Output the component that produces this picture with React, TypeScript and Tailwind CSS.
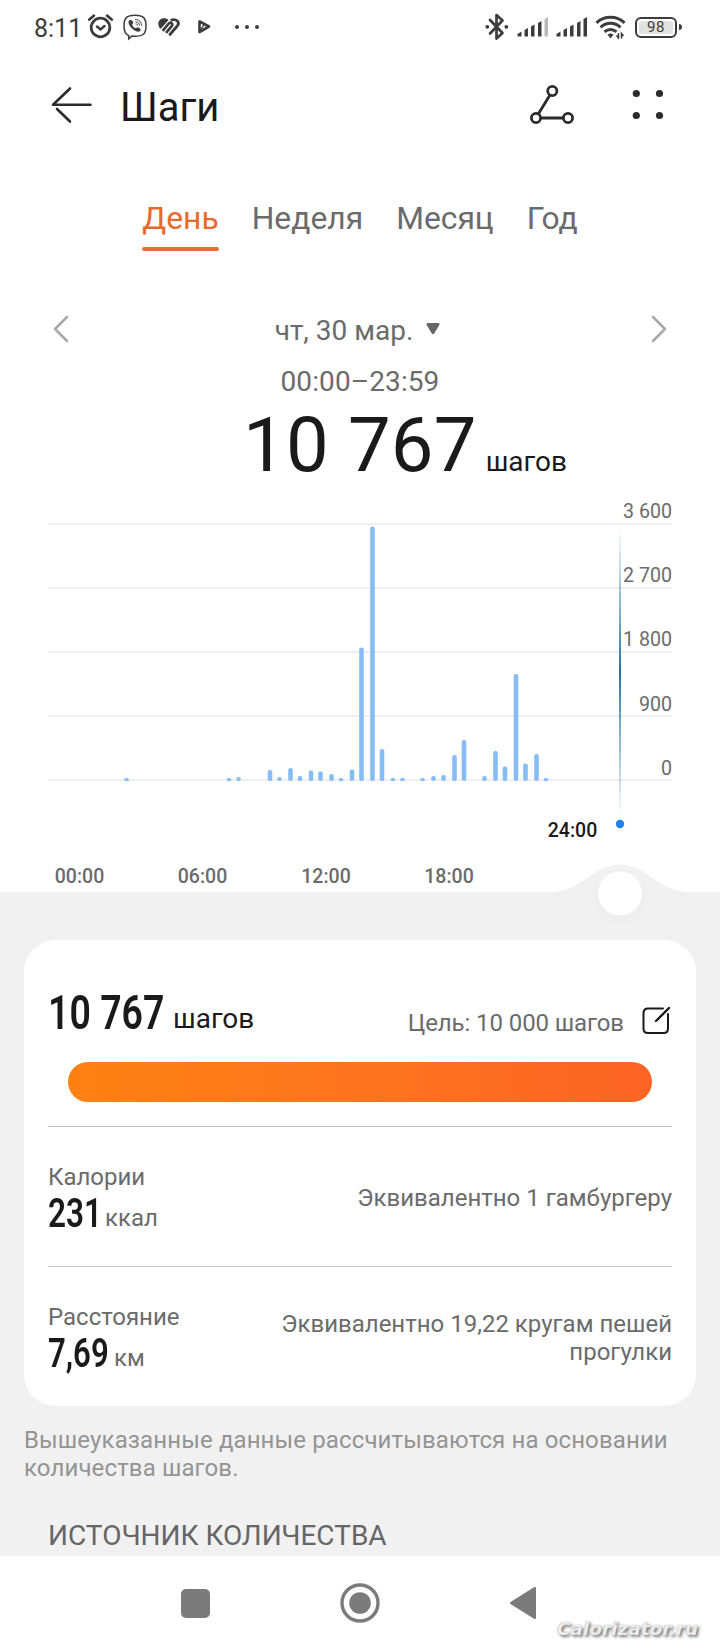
import type { ReactNode } from 'react';

const TABS = ['День', 'Неделя', 'Месяц', 'Год'];

const CHART_BASE = 781;

// x centre and top of every half-hour bar
const BARS: [number, number][] = [
  [126.5, 778], [229, 778], [238.5, 777], [270, 770], [279.5, 777], [290.5, 768],
  [300, 776], [311, 770.5], [320.5, 771.5], [331.5, 774], [341, 778], [352, 769.5],
  [361.5, 647.5], [372.5, 526.5], [382, 749], [393, 778], [402.5, 778], [422.5, 778],
  [433.5, 776], [443.5, 775], [454.5, 755], [464, 740], [484.5, 776], [495.5, 751],
  [505, 766.5], [516, 674], [525.5, 763.5], [536.5, 754], [546, 778],
];

const LEVELS = [
  { y: 524, label: '3 600' },
  { y: 588, label: '2 700' },
  { y: 652, label: '1 800' },
  { y: 716, label: '900' },
  { y: 780, label: '0' },
];

const HOURS = [
  { x: 79.5, label: '00:00' },
  { x: 202.5, label: '06:00' },
  { x: 326, label: '12:00' },
  { x: 449, label: '18:00' },
];

const Signal = ({ weak }: { weak?: boolean }) => (
  <svg width="32" height="22" viewBox="0 0 32 22" fill="#3c3c3c">
    <path d="M0.5 20.5v-2.5l4-2.5v5z" />
    <path d="M7.5 20.5v-6.5l3.5-2v8.5z" />
    <path d="M14 20.5v-10l3.5-2v12z" />
    <path d="M21 20.5v-13.5l3.5-2v15.5z" />
    <path d="M27.5 20.5v-17.5l3.5-2v19.5z" fill={weak ? '#b9b9b9' : '#3c3c3c'} />
  </svg>
);

const StatusBar = () => (
  <div className="flex h-[54px] items-center justify-between pl-[34px] pr-[38px] text-[#3c3c3c]">
    <div className="flex items-center">
      <span className="w-[53px] pt-[3px] text-[25px] leading-[30px]">8:11</span>
      <svg width="27" height="26" viewBox="87 14 27 26" fill="none" stroke="#3c3c3c" strokeLinecap="round">
        <circle cx="100.5" cy="27.5" r="9.3" strokeWidth="2.8" />
        <path d="M97 26.5l3.5 3 4-3.5" strokeWidth="2.4" />
        <path d="M89.3 19.5l4.5-3.8M111.7 19.5l-4.5-3.8" strokeWidth="2.8" />
      </svg>
      <svg className="ml-[7px]" width="28" height="28" viewBox="121 13 28 28" fill="none" stroke="#3c3c3c" strokeLinecap="round">
        <path d="M135 15.2c-8.500 0-11 2.800-11 10.800 0 5.200 1.300 8.300 4.800 9.600v3.200l3.200-2.800c11 .8 14-1.500 14-10 0-8-2.500-10.800-11-10.800z" strokeWidth="1.5" />
        <path d="M129.3 20.5c1.500-1.500 2.300-.8 3.800 1.500.8 1.300-1 1.700-.8 2.700.5 1.800 1.700 3 3.400 3.500 1 .2 1.300-1.600 2.700-.8 2.300 1.400 3 2.200 1.600 3.700-1.500 1.400-3.500.8-6.700-1.500-2.700-2-4.700-5.500-4.900-7.400-.1-.7.300-1.200.9-1.700z" fill="#3c3c3c" stroke="none" />
        <path d="M135.5 19.3c3.700.2 6 2.500 6 6.200M135.800 21.700c2.200.1 3.500 1.500 3.600 3.500M136 23.900c.9.100 1.300.6 1.400 1.300" strokeWidth="1" />
      </svg>
      <svg className="ml-[8px]" width="24" height="20" viewBox="157 17 24 20" fill="none" stroke="#3c3c3c">
        <path d="M159.3 27.5c-2.500-4.500-.2-9.300 4.700-9.300 1.900 0 3.300.6 4.600 1.700L161.3 28.300c-.7.800-1.500.3-2-.8z" fill="#3c3c3c" stroke="none" />
        <path d="M162.6 30.8l6.200-7.300c.8-1 2-1 2.800-.2s.9 1.800.1 2.800l-5.700 6.800" strokeWidth="2.700" strokeLinejoin="round" />
        <path d="M169.3 35.300l8.200-9.700c2.300-3-.3-6-3.500-6-1.300 0-2.300.4-3.200 1.100" strokeWidth="2.900" />
      </svg>
      <svg className="ml-[16px]" width="14" height="16" viewBox="197 19 14 16" fill="none" stroke="#3c3c3c" strokeLinejoin="round">
        <path d="M199.5 21.500l9.500 5-9.500 5.500z" strokeWidth="2.600" />
        <path d="M199.5 32l4.500-7.500" strokeWidth="1.400" />
      </svg>
      <svg className="ml-[22px]" width="28" height="8" viewBox="233 23 28 8" fill="#3c3c3c">
        <circle cx="237" cy="27" r="2" />
        <circle cx="247" cy="27" r="2" />
        <circle cx="257" cy="27" r="2" />
      </svg>
    </div>
    <div className="flex items-center">
      <svg width="24" height="28" viewBox="484.5 12.5 24 28" fill="none" stroke="#3c3c3c" strokeLinecap="round" strokeLinejoin="round">
        <path d="M489.5 19.5l12.5 13-6 5.5v-23.500l6 5.500-12.500 13" strokeWidth="2.700" />
        <circle cx="486.8" cy="26.3" r="1.9" fill="#3c3c3c" stroke="none" />
        <circle cx="505.8" cy="26.3" r="1.9" fill="#3c3c3c" stroke="none" />
      </svg>
      <div className="ml-[8px] flex gap-[7px]">
        <Signal weak />
        <Signal />
      </div>
      <svg className="ml-[7px]" width="32" height="24" viewBox="595 14 32 24" fill="none" stroke="#3c3c3c">
        <path d="M596.5 21.8c8-7.300 20-7.300 28 0" strokeWidth="3" />
        <path d="M600.5 26.3c6-5.300 14-5.300 20 0" strokeWidth="3" />
        <path d="M604.5 30.8c3.800-3 8.200-3 12 0" strokeWidth="3" />
        <path d="M607.5 33.5c1.800-1.500 4.200-1.500 6 0l-3 4z" fill="#3c3c3c" stroke="none" />
        <path d="M618.5 32v5l-2-2.500M621.500 37.500v-5l2 2.500" strokeWidth="1.5" />
      </svg>
      <div className="ml-[8px] flex items-center gap-[2px]">
        <span className="flex h-[21px] w-[42px] items-center justify-center rounded-[6px] border-2 border-[#3c3c3c] p-[2px]">
          <span className="flex h-full w-full items-center justify-center rounded-[3px] bg-[#e2e2e2] text-[15px] leading-none tracking-[0.5px]">98</span>
        </span>
        <span className="h-[6px] w-[3px] rounded-r-sm bg-[#3c3c3c]" />
      </div>
    </div>
  </div>
);

const Header = () => (
  <header className="flex h-[102px] items-center pl-[50px] pr-[54px]">
    <svg width="44" height="40" viewBox="50 85 44 40" fill="none" stroke="#2b2b2b" strokeWidth="2.6" strokeLinecap="round" strokeLinejoin="round">
      <path d="M70 88.5L53 104.8h37.500M57 109l13 12.500" />
    </svg>
    <h1 className="ml-[26px] flex-1 pt-[6px] text-[40px] leading-[48px] text-[#1a1a1a]">Шаги</h1>
    <svg width="48" height="42" viewBox="528 84 48 42" fill="none" stroke="#2b2b2b" strokeWidth="2.8">
      <circle cx="552.3" cy="91" r="4.6" />
      <circle cx="536" cy="118" r="4.6" />
      <circle cx="568" cy="118" r="4.6" />
      <path d="M550 95l-11.700 19M540.600 118h22.800" />
    </svg>
    <svg className="ml-[53px]" width="37" height="32" viewBox="629 89 37 32" fill="#2b2b2b">
      <circle cx="636.3" cy="93.5" r="3.6" />
      <circle cx="659.5" cy="93.5" r="3.6" />
      <circle cx="636.3" cy="115.5" r="3.6" />
      <circle cx="659.5" cy="115.5" r="3.6" />
    </svg>
  </header>
);

const Chart = () => (
  <svg className="block" width="720" height="455" viewBox="0 485 720 455">
    <defs>
      <linearGradient id="cursor" x1="0" y1="0" x2="0" y2="1">
        <stop offset="0" stopColor="#2f7fa8" stopOpacity="0" />
        <stop offset="0.5" stopColor="#23719f" />
        <stop offset="1" stopColor="#2f7fa8" stopOpacity="0" />
      </linearGradient>
      <filter id="knob" x="-50%" y="-50%" width="200%" height="200%">
        <feDropShadow dx="0" dy="3" stdDeviation="4" floodOpacity="0.03" />
      </filter>
    </defs>
    {LEVELS.map(({ y, label }) => (
      <g key={label}>
        <rect x="48" y={y - 1} width="624" height="2" fill="#efefef" />
        <text x="672" y={y < 700 ? y - 6 : y - 5} textAnchor="end" fontSize="19.6" fill="#6b6b6b">{label}</text>
      </g>
    ))}
    {BARS.map(([x, top]) => (
      <rect key={x} x={x - 2.3} y={top} width="4.6" height={CHART_BASE - top} rx={Math.min(2, (CHART_BASE - top) / 2)} fill="#86bdf5" />
    ))}
    <rect x="619" y="527" width="2" height="290" fill="url(#cursor)" />
    <circle cx="620" cy="824" r="4.2" fill="#2184ee" />
    <text x="572.5" y="837" textAnchor="middle" fontSize="19.5" fontWeight="500" fill="#1a1a1a">24:00</text>
    {HOURS.map(({ x, label }) => (
      <text key={label} x={x} y="883" textAnchor="middle" fontSize="19.5" fontWeight="500" fill="#6b6b6b">{label}</text>
    ))}
    <path d="M0 892H550C583 892 592 864.5 620 864.5S657 892 690 892H720V940H0z" fill="#f1f1f1" />
    <circle cx="620" cy="893.5" r="22" fill="#fff" filter="url(#knob)" />
  </svg>
);

type MetricProps = {
  label: string;
  value: ReactNode;
  unit: string;
  note: ReactNode;
};

const Metric = ({ label, value, unit, note }: MetricProps) => (
  <div className="flex h-[140px] items-center justify-between border-t border-[#c6c6c6] pt-[5px] text-[24px] leading-[28px] text-[#6b6b6b]">
    <div>
      <div>{label}</div>
      <div className="flex h-[44px] items-baseline leading-[44px]">
        {value}
        <span className="relative -top-px leading-[42px]">{unit}</span>
      </div>
    </div>
    <p className="pb-[2px] text-right">{note}</p>
  </div>
);

export default function App() {
  return (
    <div className="h-[1650px] w-[720px] overflow-hidden bg-white font-['Roboto',sans-serif]">
      <StatusBar />
      <Header />

      <nav className="flex justify-center gap-[33px] pt-[42px] text-[31.8px] leading-[40px] text-[#6b6b6b]">
        {TABS.map((tab, i) => (
          <button key={tab} className={i === 0 ? 'relative pb-[13px] text-[#e9692c]' : 'pb-[13px]'}>
            {tab}
            {i === 0 && <span className="absolute inset-x-0 bottom-0 h-[4px] rounded-full bg-[#e2703a]" />}
          </button>
        ))}
      </nav>

      <section className="text-[28px] leading-[32px] text-[#6b6b6b]">
        <div className="mt-[63px] flex items-center justify-between px-[52px]">
          <svg className="mb-[2px]" width="18" height="30" viewBox="0 0 18 30" fill="none" stroke="#a9a9a9" strokeWidth="2.5" strokeLinecap="round" strokeLinejoin="round">
            <path d="M15 2L3 14l12 12" />
          </svg>
          <div className="flex items-center gap-[13px] pr-[5px] pt-[1px]">
            <span>чт, 30 мар.</span>
            <svg className="mb-[2px]" width="14" height="16" viewBox="0 0 14 16">
              <path d="M2 1h10c1.500 0 2 1.200 1.200 2.200L8.200 11.500c-.7.900-1.700.9-2.400 0L.8 3.200C0 2.200.5 1 2 1z" fill="#666" />
            </svg>
          </div>
          <svg className="mb-[2px]" width="18" height="30" viewBox="0 0 18 30" fill="none" stroke="#a9a9a9" strokeWidth="2.5" strokeLinecap="round" strokeLinejoin="round">
            <path d="M3 2l12 12L3 26" />
          </svg>
        </div>
        <p className="mt-[19px] text-center tracking-[0.1px]">00:00–23:59</p>
        <div className="mt-[7px] flex h-[80px] items-baseline pl-[243px] leading-[80px] text-[#1a1a1a]">
          <span className="text-[76px] tracking-[0.2px]">10 767</span>
          <span className="ml-[9px]">шагов</span>
        </div>
      </section>

      <Chart />

      <main className="h-[616px] overflow-hidden bg-[#f1f1f1] px-[24px]">
        <div className="h-[466px] rounded-[32px] bg-white px-[24px]">
          <div className="flex h-[122px] items-start justify-between pt-[46px]">
            <div className="flex items-baseline leading-[52px] text-[#1a1a1a]">
              <span className="w-[125px]">
                <span className="relative top-[1px] inline-block origin-left scale-x-[0.765] whitespace-nowrap text-[49px] font-semibold">10 767</span>
              </span>
              <span className="text-[28px]">шагов</span>
            </div>
            <div className="flex items-center pt-[19px] text-[24px] leading-[32px] text-[#6b6b6b]">
              <span className="pt-[2px] tracking-[-0.1px]">Цель: 10 000 шагов</span>
              <svg className="mb-[2px] ml-[17px] mr-[1px]" width="30" height="30" viewBox="0 0 30 30" fill="none" stroke="#1a1a1a" strokeWidth="2" strokeLinecap="round">
                <path d="M22 2.5H7C4 2.5 2.5 4 2.5 7v15.500c0 3 1.500 4.500 4.500 4.500h15.500c3 0 4.500-1.500 4.500-4.500V8" />
                <path d="M15 15L28 2" strokeWidth="2.4" />
              </svg>
            </div>
          </div>
          <div className="mx-[20px] mb-[24px] h-[40px] rounded-full bg-linear-to-r from-[#fd8212] to-[#fc6425]" />
          <Metric
            label="Калории"
            value={<span className="w-[57px]"><span className="inline-block origin-left scale-x-[0.77] text-[41px] font-semibold text-[#1a1a1a]">231</span></span>}
            unit="ккал"
            note="Эквивалентно 1 гамбургеру"
          />
          <Metric
            label="Расстояние"
            value={<span className="w-[66px]"><span className="inline-block origin-left scale-x-[0.76] text-[41px] font-semibold text-[#1a1a1a]">7,69</span></span>}
            unit="км"
            note={<>Эквивалентно 19,22 кругам пешей<br />прогулки</>}
          />
        </div>
        <p className="mt-[20px] text-[24px] leading-[28px] tracking-[0.12px] text-[#949494]">
          Вышеуказанные данные рассчитываются на основании<br />количества шагов.
        </p>
        <h2 className="ml-[24px] mt-[38px] text-[28px] leading-[32px] text-[#666]">ИСТОЧНИК КОЛИЧЕСТВА</h2>
      </main>

      <footer className="relative flex h-[94px] items-center bg-white pl-[181px]">
        <span className="h-[29px] w-[29px] rounded-[5px] bg-[#7b7b7b]" />
        <svg className="ml-[130px]" width="40" height="40" viewBox="0 0 40 40">
          <circle cx="20" cy="20" r="18" fill="none" stroke="#7b7b7b" strokeWidth="3.4" />
          <circle cx="20" cy="20" r="10.8" fill="#7b7b7b" />
        </svg>
        <svg className="ml-[129px]" width="28" height="34" viewBox="0 0 28 34">
          <path d="M25 1.2c1-.7 2-.2 2 1v29.600c0 1.200-1 1.700-2 1L1.500 18c-.8-.6-.8-1.400 0-2z" fill="#7b7b7b" />
        </svg>
        <span className="absolute bottom-[8px] right-[22px] font-['DejaVu_Sans',sans-serif] text-[18.5px] font-bold italic leading-[26px] text-[#ececec] [text-shadow:0_0_1px_#999,2px_2px_3px_#777]">
          Calorizator.ru
        </span>
      </footer>
    </div>
  );
}
